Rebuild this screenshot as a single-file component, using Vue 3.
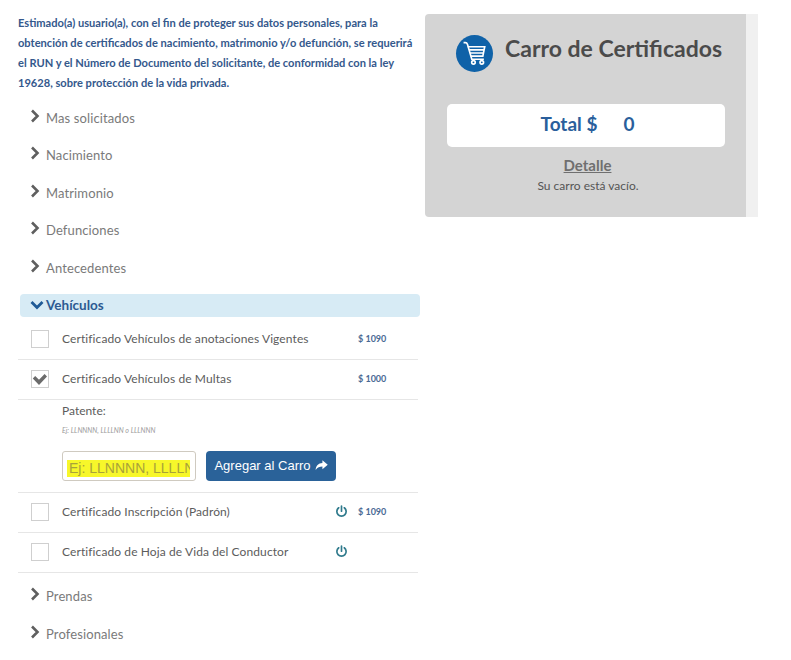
<script setup>
const before = ['Mas solicitados', 'Nacimiento', 'Matrimonio', 'Defunciones', 'Antecedentes']
const after = ['Prendas', 'Profesionales']
</script>

<template>
  <div class="page">
    <main class="left">
      <p class="intro">Estimado(a) usuario(a), con el fin de proteger sus datos personales, para la<br>obtención de certificados de nacimiento, matrimonio y/o defunción, se requerirá<br>el RUN y el Número de Documento del solicitante, de conformidad con la ley<br>19628, sobre protección de la vida privada.</p>

      <div class="acc-list">
        <div v-for="t in before" :key="t" class="acc">
          <svg class="chev" viewBox="0 0 10 14"><path d="M2 1.5 7.5 7 2 12.5" /></svg>
          <span>{{ t }}</span>
        </div>
      </div>

      <div class="open-head">
        <svg class="chev-down" viewBox="0 0 14 10"><path d="M1.5 2 7 7.5 12.5 2" /></svg>
        <span>Vehículos</span>
      </div>

      <div class="row first">
        <span class="check"></span>
        <span class="name">Certificado Vehículos de anotaciones Vigentes</span>
        <span class="icon-slot"></span>
        <span class="price">$ 1090</span>
      </div>
      <div class="row">
        <span class="check">
          <svg viewBox="0 0 16 16"><path d="M.8 7.4 3.2 5 7 8.8 12.6 3 15 5.6 7 14Z" /></svg>
        </span>
        <span class="name">Certificado Vehículos de Multas</span>
        <span class="icon-slot"></span>
        <span class="price">$ 1000</span>
      </div>

      <div class="form">
        <div class="label">Patente:</div>
        <div class="hint">Ej: LLNNNN, LLLLNN o LLLNNN</div>
        <div class="controls">
          <div class="input"><input class="ph" type="text" placeholder="Ej: LLNNNN, LLLLNN o LLLNNN" /></div>
          <button class="add" type="button">
            Agregar al Carro
            <svg viewBox="0 0 14 12"><path d="M8 .4 13.8 5.3 8 10.2V7.2C5 7.2 2.6 7.8.6 11 .8 6.4 3.6 3.4 8 3.3Z" /></svg>
          </button>
        </div>
      </div>

      <div class="row">
        <span class="check"></span>
        <span class="name">Certificado Inscripción (Padrón)</span>
        <span class="icon-slot">
          <svg class="power" viewBox="0 0 14 14"><path d="M7 1.2V6.6M4 3A5 5 0 1 0 10 3" /></svg>
        </span>
        <span class="price">$ 1090</span>
      </div>
      <div class="row">
        <span class="check"></span>
        <span class="name">Certificado de Hoja de Vida del Conductor</span>
        <span class="icon-slot">
          <svg class="power" viewBox="0 0 14 14"><path d="M7 1.2V6.6M4 3A5 5 0 1 0 10 3" /></svg>
        </span>
        <span class="price"></span>
      </div>

      <div class="acc-list after">
        <div v-for="t in after" :key="t" class="acc">
          <svg class="chev" viewBox="0 0 10 14"><path d="M2 1.5 7.5 7 2 12.5" /></svg>
          <span>{{ t }}</span>
        </div>
      </div>
    </main>

    <aside class="cart-wrap">
      <section class="cart">
        <div class="cart-head">
          <span class="badge">
            <svg viewBox="0 0 24 24">
              <path d="M1.5 1.5h1.8c1 0 1.6.7 2 1.8L9.4 17.5H21" />
              <path d="M5.5 5.5h16.3l-1.8 9H8.4M6.8 8.5h14.4M7.6 11.5h13" />
              <circle cx="11" cy="20.5" r="1.7" />
              <circle cx="19" cy="20.5" r="1.7" />
            </svg>
          </span>
          <h2>Carro de Certificados</h2>
        </div>
        <div class="total"><span>Total $</span><span class="zero">0</span></div>
        <a class="detail">Detalle</a>
        <p class="empty">Su carro está vacío.</p>
      </section>
      <div class="stripe"></div>
    </aside>
  </div>
</template>

<style>
html, body { background: #fff; }
</style>

<style scoped>
.page {
  width: 791px;
  height: 660px;
  overflow: hidden;
  display: flex;
  align-items: flex-start;
  font-family: Lato, "Noto Sans", sans-serif;
  color: #555;
}
.left {
  width: 400px;
  margin-left: 18px;
  padding-top: 13px;
  flex: none;
}
.intro {
  margin: 0;
  font-size: 11.1px;
  line-height: 20px;
  font-weight: 700;
  color: #34588c;
  white-space: nowrap;
}
.acc-list { margin-top: 6px; }
.acc {
  height: 37.5px;
  display: flex;
  align-items: center;
  padding-left: 12px;
  font-size: 13px;
  letter-spacing: .12px;
  color: #7a7a7a;
}
.chev {
  width: 10px;
  height: 14px;
  margin-right: 6px;
  margin-top: -4px;
  fill: none;
  stroke: #5f5f5f;
  stroke-width: 2.6;
}
.open-head {
  margin: 7px -2px 0 2px;
  height: 23px;
  background: #d7ebf5;
  border-radius: 4px;
  display: flex;
  align-items: center;
  padding-left: 10px;
  font-size: 13.5px;
  font-weight: 700;
  color: #2c5a92;
}
.chev-down {
  width: 14px;
  height: 10px;
  margin-right: 2px;
  fill: none;
  stroke: #1f5a96;
  stroke-width: 2.8;
}
.row {
  height: 39px;
  border-bottom: 1px solid #e6e6e6;
  display: flex;
  align-items: center;
  padding-left: 13px;
  font-size: 12px;
  letter-spacing: .1px;
  color: #5c5c5c;
}
.row.first { margin-top: 3px; }
.check {
  width: 16px;
  height: 16px;
  border: 1px solid #cfcfcf;
  background: #fff;
  flex: none;
  margin-right: 13px;
  display: flex;
}
.check svg { width: 100%; height: 100%; fill: #6b6b6b; }
.name { width: 273px; flex: none; white-space: nowrap; padding-bottom: 2px; }
.icon-slot { width: 23px; flex: none; display: flex; padding-bottom: 2px; }
.power {
  width: 13px;
  height: 13px;
  fill: none;
  stroke: #2f7a8c;
  stroke-width: 1.8;
  stroke-linecap: round;
}
.price { font-size: 9px; font-weight: 700; letter-spacing: 0; color: #4a6a94; white-space: nowrap; padding-bottom: 2px; }
.form {
  height: 93px;
  padding-left: 44px;
  border-bottom: 1px solid #e6e6e6;
  box-sizing: border-box;
  padding-top: 4px;
}
.label { font-size: 12px; line-height: 14px; color: #5c5c5c; }
.hint {
  font-size: 7px;
  line-height: 9px;
  margin-top: 8px;
  font-style: italic;
  color: #9a9a9a;
}
.controls { display: flex; gap: 10px; margin-top: 16px; }
.input {
  width: 134px;
  height: 30px;
  box-sizing: border-box;
  border: 1px solid #cfcac0;
  border-radius: 3px;
  background: #fff;
  overflow: hidden;
  padding: 8px 5px 0 4px;
}
.ph {
  display: block;
  box-sizing: border-box;
  height: 17px;
  width: 123px;
  border: 0;
  padding: 0 0 0 2px;
  margin: 0;
  outline: 0;
  font-family: "Liberation Sans", Arial, sans-serif;
  font-size: 14px;
  background: #f7f72a;
}
.ph::placeholder { color: #a8a23a; opacity: 1; }
.add {
  width: 130px;
  height: 30px;
  border: 0;
  border-radius: 4px;
  background: #2a6299;
  color: #fff;
  font-family: "Liberation Sans", Arial, sans-serif;
  font-size: 13px;
  padding: 0;
  display: flex;
  align-items: center;
  justify-content: center;
  gap: 4px;
}
.add svg { width: 13px; height: 11px; fill: #fff; }
.acc-list.after { margin-top: 5px; }
.cart-wrap {
  margin: 14px 0 0 7px;
  display: flex;
  flex: none;
  align-items: stretch;
}
.cart {
  width: 321px;
  height: 203px;
  box-sizing: border-box;
  background: #d4d4d4;
  border-radius: 4px 0 0 4px;
  padding-top: 21px;
  display: flex;
  flex-direction: column;
  align-items: center;
}
.stripe { width: 12px; background: #f0f0f0; }
.cart-head { display: flex; align-items: center; align-self: flex-start; margin-left: 31px; }
.badge {
  width: 37px;
  height: 37px;
  border-radius: 50%;
  background: #0f62a8;
  display: flex;
  align-items: center;
  justify-content: center;
  margin-right: 12px;
}
.badge svg {
  width: 25px;
  height: 25px;
  fill: none;
  stroke: #fff;
  stroke-width: 1.6;
}
h2 {
  margin: -11px 0 0;
  font-size: 23px;
  font-weight: 700;
  line-height: 30px;
  color: #4b4b4b;
  white-space: nowrap;
}
.total {
  width: 278px;
  height: 43px;
  box-sizing: border-box;
  margin-top: 32px;
  background: #fff;
  border-radius: 5px;
  display: flex;
  align-items: center;
  justify-content: center;
  gap: 26px;
  padding: 0 0 4px 4px;
  font-size: 19px;
  font-weight: 700;
  color: #2a5f9c;
}
.detail {
  margin: 8px 0 0 4px;
  font-size: 15px;
  line-height: 20px;
  font-weight: 700;
  color: #6f6f6f;
  text-decoration: underline;
}
.empty {
  margin: 3px 0 0 5px;
  font-size: 12px;
  line-height: 16px;
  color: #555;
}
</style>
